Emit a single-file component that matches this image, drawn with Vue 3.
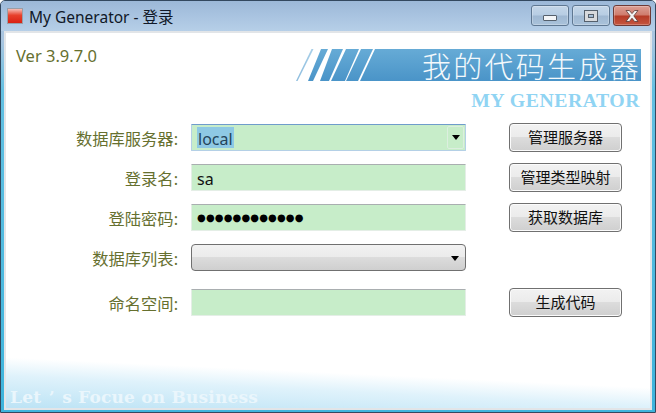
<script setup>
const rows = [
  { label: '数据库服务器:', kind: 'combo', button: '管理服务器' },
  { label: '登录名:', kind: 'text', value: 'sa', button: '管理类型映射' },
  { label: '登陆密码:', kind: 'pass', value: '●●●●●●●●●●●●', button: '获取数据库' },
  { label: '数据库列表:', kind: 'select' },
  { label: '命名空间:', kind: 'text', value: '', button: '生成代码', extra: true },
]
const stripes = [
  { points: '1,32 2.500,32 18.500,0 16.500,0', fill: 'url(#bandPale)' },
  { points: '13,32 18,32 33,0 26,0', fill: 'url(#band)' },
  { points: '25,32 34,32 48,0 37,0', fill: 'url(#band)' },
  { points: '36,32 50,32 64,0 51,0', fill: 'url(#band)' },
  { points: '51,32 63,32 78,0 66,0', fill: 'url(#band)' },
  { points: '65,32 346,32 346,0 80,0', fill: 'url(#band)' },
]
</script>

<template>
  <div class="window">
    <header class="titlebar">
      <svg class="app-icon" width="16" height="16" viewBox="0 0 16 16">
        <defs>
          <linearGradient id="flag" x1="0" y1="0" x2="0" y2="1">
            <stop offset="0" stop-color="#f8c8c0" />
            <stop offset="0.45" stop-color="#e8412c" />
            <stop offset="1" stop-color="#d81e10" />
          </linearGradient>
        </defs>
        <rect x="0.5" y="0.5" width="15" height="15" fill="url(#flag)" stroke="#9a9ea6" />
      </svg>
      <span class="title">My Generator - 登录</span>
      <div class="caption">
        <div class="cap cap-min"><i class="glyph-min"></i></div>
        <div class="cap cap-max"><i class="glyph-max"></i></div>
        <div class="cap cap-close">
          <svg width="20" height="14" viewBox="0 0 20 14">
            <path d="M4 1.500h3.400L10 4.600l2.600-3.100H16l-4.200 5.400L16 12.500h-3.400L10 9.200l-2.600 3.300H4l4.200-5.600z" fill="#f2f2f2" stroke="#5d3a36" stroke-width="0.8" />
          </svg>
        </div>
      </div>
    </header>

    <main class="client">
      <div class="head">
        <span class="version">Ver 3.9.7.0</span>
        <div class="brand">
          <div class="banner">
            <svg class="stripes" width="346" height="32" viewBox="0 0 346 32">
              <defs>
                <linearGradient id="band" x1="0" y1="0" x2="0" y2="32" gradientUnits="userSpaceOnUse">
                  <stop offset="0" stop-color="#66abd6" />
                  <stop offset="1" stop-color="#4a94c8" />
                </linearGradient>
                <linearGradient id="bandPale" x1="0" y1="0" x2="0" y2="32" gradientUnits="userSpaceOnUse">
                  <stop offset="0" stop-color="#a8cfe8" />
                  <stop offset="1" stop-color="#8cbcde" />
                </linearGradient>
              </defs>
              <polygon v-for="s in stripes" :key="s.points" :points="s.points" :fill="s.fill" />
            </svg>
            <span class="banner-text">我的代码生成器</span>
          </div>
          <div class="brand-en">MY GENERATOR</div>
        </div>
      </div>

      <form class="form" @submit.prevent>
        <div v-for="r in rows" :key="r.label" class="row" :class="{ extra: r.extra }">
          <label class="label">{{ r.label }}</label>
          <div v-if="r.kind === 'combo'" class="field combo">
            <span class="selected">local</span>
            <span class="drop"><i class="arrow"></i></span>
          </div>
          <div v-else-if="r.kind === 'select'" class="select"><i class="arrow"></i></div>
          <div v-else class="field" :class="{ pass: r.kind === 'pass' }">{{ r.value }}</div>
          <button v-if="r.button" class="btn" type="button">{{ r.button }}</button>
        </div>
      </form>

      <footer class="foot">Let<span class="wide">’</span>s Focue on Business</footer>
    </main>
  </div>
</template>

<style>
html, body { margin: 0; overflow: hidden; background: #fff; }
</style>

<style scoped>
.window {
  width: 656px;
  height: 413px;
  box-sizing: border-box;
  display: flex;
  flex-direction: column;
  background: linear-gradient(#a9c5e0 0, #a9c5e0 40px, #62c0e2 90px, #3db4dc 100%);
  border: 1px solid #33485f;
  border-radius: 5px 5px 0 0;
  font-family: "Noto Sans", "Noto Sans CJK SC", sans-serif;
  overflow: hidden;
}
.titlebar {
  height: 30px;
  flex: none;
  display: flex;
  align-items: center;
  padding: 0 4px 0 6px;
  box-sizing: border-box;
  background: linear-gradient(#9cb8d8 0%, #b6cfe8 100%);
}
.app-icon { flex: none; margin-right: 6px; }
.title { font-size: 15.500px; color: #101828; white-space: nowrap; }
.caption { margin-left: auto; display: flex; gap: 3px; align-self: flex-start; margin-top: 4px; }
.cap {
  width: 38px;
  height: 21px;
  box-sizing: border-box;
  border: 1px solid #5f7892;
  border-radius: 3px;
  display: flex;
  align-items: center;
  justify-content: center;
  background: linear-gradient(#c4d6e8 0%, #b7cde3 48%, #9fb8d2 52%, #a9c2da 100%);
  box-shadow: inset 0 0 0 1px rgba(255, 255, 255, 0.25);
}
.cap-close {
  border-color: #6e3a36;
  background: linear-gradient(#dc9f95 0%, #cf7b6c 48%, #b53a26 52%, #c5563f 100%);
}
.glyph-min {
  display: block;
  width: 12px;
  height: 4px;
  margin-top: 5px;
  background: #f3f5f7;
  border: 1px solid #55606c;
  border-radius: 1px;
}
.glyph-max {
  display: block;
  width: 6px;
  height: 4px;
  background: transparent;
  border: 3px solid #d8dadd;
  outline: 1px solid #55606c;
  box-shadow: inset 0 0 0 1px #55606c;
}
.client {
  flex: 1;
  min-height: 0;
  margin: 0 3px 2px;
  border: 2px solid #e2e5e8;
  display: flex;
  flex-direction: column;
  background: linear-gradient(182.700deg, #fff 0%, #fff 87.500%, #dff2fb 92%, #bce3f5 100%);
}
.head {
  display: flex;
  justify-content: space-between;
  height: 90px;
  flex: none;
  padding: 12px 9px 0 10px;
  box-sizing: border-box;
}
.version { font-size: 16.500px; line-height: 22px; color: #66702f; height: 22px; }
.brand { width: 346px; margin-top: 4px; display: flex; flex-direction: column; }
.banner {
  position: relative;
  height: 32px;
  display: flex;
  align-items: center;
  justify-content: flex-end;
}
.stripes { position: absolute; inset: 0; }
.banner-text {
  position: relative;
  color: #f4f9fc;
  font-family: "Noto Sans CJK SC", sans-serif;
  font-weight: 300;
  font-size: 29px;
  letter-spacing: 2.300px;
  line-height: 32px;
}
.brand-en {
  margin-top: 9px;
  text-align: right;
  padding-right: 1px;
  font-family: "Liberation Serif", serif;
  font-weight: 700;
  font-size: 19.800px;
  letter-spacing: 0.500px;
  line-height: 20px;
  color: #90d4f3;
  white-space: nowrap;
}
.form { display: flex; flex-direction: column; gap: 11px; flex: none; }
.row {
  display: grid;
  grid-template-columns: 172px 275px 113px;
  grid-template-rows: 29px;
  column-gap: 13px;
  align-items: center;
  height: 29px;
}
.row .btn { margin-left: 30px; width: 113px; }
.row.extra { margin-top: 5px; }
.label {
  font-size: 16.300px;
  color: #66702f;
  text-align: right;
  white-space: nowrap;
  line-height: 29px;
  height: 29px;
  box-sizing: border-box;
  padding-top: 2px;
}
.field {
  height: 27px;
  box-sizing: border-box;
  background: #c7edc9;
  border: 1px solid #e4eee6;
  border-top-color: #a9aeb0;
  padding-left: 5px;
  font-size: 16px;
  line-height: 29px;
  color: #111;
  border-radius: 1px;
}
.pass {
  font-family: "DejaVu Sans", sans-serif;
  font-size: 10px;
  letter-spacing: 0.150px;
  line-height: 26px;
  color: #000;
}
.combo {
  display: flex;
  align-items: center;
  justify-content: space-between;
  border: 1px solid #b4d0e6;
  border-top-color: #6f9ccb;
  padding-right: 1px;
}
.selected {
  background: #8ec9e4;
  color: #23445a;
  line-height: 24px;
  height: 21px;
  padding: 0 1px;
}
.drop {
  width: 17px;
  height: 23px;
  box-sizing: border-box;
  border: 1px solid #dcefdf;
  border-radius: 2px;
  display: flex;
  align-items: center;
  justify-content: center;
}
.arrow {
  display: block;
  width: 0;
  height: 0;
  border-left: 4px solid transparent;
  border-right: 4px solid transparent;
  border-top: 5px solid #000;
}
.select {
  height: 27px;
  box-sizing: border-box;
  border: 1px solid #707070;
  border-radius: 4px;
  background: linear-gradient(#f2f2f2 0%, #ebebeb 48%, #dcdcdc 50%, #cfcfcf 100%);
  display: flex;
  align-items: center;
  justify-content: flex-end;
  padding-right: 6px;
}
.select .arrow { border-left-width: 4.500px; border-right-width: 4.500px; margin-top: 2px; }
.btn {
  height: 29px;
  box-sizing: border-box;
  border: 1px solid #707070;
  border-radius: 4px;
  background: linear-gradient(#f2f2f2 0%, #ebebeb 48%, #dcdcdc 50%, #cfcfcf 100%);
  box-shadow: inset 0 0 0 1px #fbfbfb;
  font-family: "Noto Sans CJK SC", sans-serif;
  font-size: 15px;
  color: #111;
  padding: 0 0 2px;
  white-space: nowrap;
}
.foot {
  margin-top: auto;
  padding: 0 0 0 4px;
  font-family: "DejaVu Serif", serif;
  font-weight: 700;
  font-size: 17px;
  letter-spacing: 0.200px;
  line-height: 22px;
  color: #eaf6fc;
  white-space: nowrap;
}
.wide {
  display: inline-block;
  width: 21px;
  text-align: center;
  letter-spacing: 0;
}
</style>
